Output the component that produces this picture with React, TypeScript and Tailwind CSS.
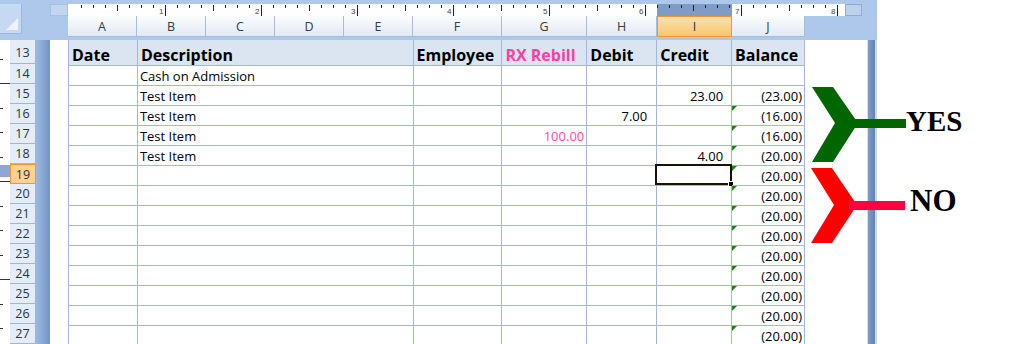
import React from "react";

type Cell = { t: string; pink?: boolean; right?: boolean };

const colW = [69, 276, 89, 85, 70, 75, 73];

const headers: Cell[] = [
  { t: "Date" },
  { t: "Description" },
  { t: "Employee" },
  { t: "RX Rebill", pink: true },
  { t: "Debit" },
  { t: "Credit" },
  { t: "Balance" },
];

// row number -> [A, B, F, G, H, I, J]
const rows: { n: number; cells: string[] }[] = [
  { n: 14, cells: ["", "Cash on Admission", "", "", "", "", ""] },
  { n: 15, cells: ["", "Test Item", "", "", "", "23.00", "(23.00)"] },
  { n: 16, cells: ["", "Test Item", "", "", "7.00", "", "(16.00)"] },
  { n: 17, cells: ["", "Test Item", "", "100.00", "", "", "(16.00)"] },
  { n: 18, cells: ["", "Test Item", "", "", "", "4.00", "(20.00)"] },
  { n: 19, cells: ["", "", "", "", "", "", "(20.00)"] },
  { n: 20, cells: ["", "", "", "", "", "", "(20.00)"] },
  { n: 21, cells: ["", "", "", "", "", "", "(20.00)"] },
  { n: 22, cells: ["", "", "", "", "", "", "(20.00)"] },
  { n: 23, cells: ["", "", "", "", "", "", "(20.00)"] },
  { n: 24, cells: ["", "", "", "", "", "", "(20.00)"] },
  { n: 25, cells: ["", "", "", "", "", "", "(20.00)"] },
  { n: 26, cells: ["", "", "", "", "", "", "(20.00)"] },
  { n: 27, cells: ["", "", "", "", "", "", "(20.00)"] },
];

const colLetters = [
  { l: "A", w: 69 },
  { l: "B", w: 69 },
  { l: "C", w: 69 },
  { l: "D", w: 69 },
  { l: "E", w: 69 },
  { l: "F", w: 89 },
  { l: "G", w: 85 },
  { l: "H", w: 70 },
  { l: "I", w: 75, sel: true },
  { l: "J", w: 73 },
];

// right padding per column (numbers sit close to the edge in G and J)
const padR = ["pr-[7px] ", "pr-[7px] ", "pr-[7px] ", "pr-[2px] ", "pr-[9px] ", "pr-[8px] ", "pr-[2px] "];

const Ruler = () => {
  const ticks = [];
  // ruler svg starts at page x=50
  for (let x = 165 - 96; x < 845; x += 12) {
    if (x < 68) continue;
    const rel = x - 50;
    const fromInch = (((x - 165) % 96) + 96) % 96;
    if (fromInch === 0) continue;
    const h = fromInch === 48 ? 6 : 3;
    ticks.push(<line key={x} x1={rel + 0.5} x2={rel + 0.5} y1={1} y2={1 + h} stroke="#222" strokeWidth={1} />);
  }
  const labels = [1, 2, 3, 4, 5, 6, 7, 8];
  return (
    <svg width={812} height={12} className="block">
      <rect x={0} y={0} width={18} height={12} fill="#c3d6f0" stroke="#8eaad6" />
      <rect x={18} y={0} width={777} height={12} fill="#ffffff" />
      <rect x={607} y={0} width={75} height={12} fill="#7f9cc8" />
      <rect x={795.5} y={0.5} width={16} height={11} fill="#bcd1ee" stroke="#8eaad6" />
      {ticks}
      {labels.map((n) => {
        const x = 165 + 96 * (n - 1) - 50;
        return (
          <g key={n}>
            <line x1={x + 0.5} x2={x + 0.5} y1={1} y2={12} stroke="#222" />
            <text x={x - 6} y={10} fontSize={8} fill="#444" fontFamily="Liberation Sans, sans-serif">
              {n}
            </text>
          </g>
        );
      })}
    </svg>
  );
};

const VRuler = () => {
  const ticks = [];
  for (let i = -2; i < 12; i++) {
    const y = 83 - 40 + i * 24.5;
    if (y < 0 || y > 304) continue;
    const major = ((i % 4) + 4) % 4 === 0;
    ticks.push(
      <line key={i} x1={0} x2={major ? 10 : 3} y1={Math.round(y) + 0.5} y2={Math.round(y) + 0.5} stroke="#333" />
    );
  }
  return (
    <svg width={10} height={304} className="block">
      <rect x={0} y={0} width={10} height={304} fill="#ffffff" />
      <rect x={0} y={125} width={10} height={12} fill="#8da8d2" />
      {ticks}
    </svg>
  );
};

export default function App() {
  return (
    <div
      className="relative w-[1022px] h-[344px] overflow-hidden bg-white flex"
      style={{ fontFamily: "'Open Sans', sans-serif" }}
    >
      {/* excel window */}
      <div className="w-[877px] h-full flex flex-col">
        {/* top: ruler + column headings */}
        <div className="h-[40px] flex bg-[#aec8ec]">
          <div className="w-[50px] pt-[4px]">
            <div className="relative w-[22px] h-[30px] bg-[#c6d9f3] border-r border-b border-[#9cb6dc]">
              <div className="absolute right-[3px] bottom-[3px] w-0 h-0 border-l-[12px] border-l-transparent border-b-[12px] border-b-[#eef3fa]" />
            </div>
          </div>
          <div className="flex flex-col">
            <div className="mt-[4px] h-[12px]">
              <Ruler />
            </div>
            <div className="ml-[18px] h-[21px] flex">
              {colLetters.map((c) => (
                <div
                  key={c.l}
                  className={
                    c.sel
                      ? "h-full flex items-center justify-center pt-[2px] text-[12.5px] text-[#2a3a2a] border border-[#f29536] bg-gradient-to-b from-[#fbe0ad] to-[#f6c66d]"
                      : "h-full flex items-center justify-center pt-[2px] text-[12.5px] text-[#333c4a] border-r border-b border-[#a7bcd9] bg-gradient-to-b from-[#fbfcfe] to-[#e2e9f3]"
                  }
                  style={{ width: c.w }}
                >
                  {c.l}
                </div>
              ))}
            </div>
          </div>
        </div>

        {/* body */}
        <div className="flex-1 flex min-h-0">
          <VRuler />
          {/* row headings */}
          <div className="w-[26px] flex flex-col">
            <div className="h-[26px] flex items-center justify-center pt-[4px] text-[12.5px] text-[#27334a] bg-[#e4ecf7] border-b border-r border-[#9eb6ce]">
              13
            </div>
            {rows.map((r) => (
              <div
                key={r.n}
                className={
                  r.n === 19
                    ? "h-[20px] shrink-0 flex items-center justify-center pt-[2px] text-[12.5px] text-[#27334a] bg-[#fcd28e] border border-[#f29536]"
                    : "h-[20px] shrink-0 flex items-center justify-center pt-[2px] text-[12.5px] text-[#27334a] bg-[#e4ecf7] border-b border-r border-[#9eb6ce]"
                }
              >
                {r.n}
              </div>
            ))}
          </div>
          <div className="w-[14px] bg-gradient-to-r from-[#9db9e2] to-[#7494c6]" />
          <div className="w-[18px] bg-white" />

          {/* grid */}
          <div className="w-[737px] flex flex-col border-l border-[#a3b8d6] text-black">
            <div className="h-[26px] shrink-0 flex bg-[#dbe5f1]">
              {headers.map((h, i) => (
                <div
                  key={i}
                  className={
                    h.pink
                      ? "h-full flex items-end pl-[3px] text-[16px] font-bold leading-[20px] text-[#ff3fa0] border-r border-b border-[#a3b8d6]"
                      : "h-full flex items-end pl-[3px] text-[16px] font-bold leading-[20px] text-black border-r border-b border-[#a3b8d6]"
                  }
                  style={{ width: colW[i] }}
                >
                  {h.t}
                </div>
              ))}
            </div>
            {rows.map((r) => (
              <div key={r.n} className="h-[20px] shrink-0 flex">
                {r.cells.map((c, i) => {
                  const isNum = i >= 3;
                  const pink = i === 3;
                  return (
                    <div
                      key={i}
                      className={
                        "relative h-full flex items-end text-[13px] leading-[17px] border-r border-b border-[#a3b8d6] " +
                        (isNum ? "justify-end " : "pl-[2px] ") +
                        padR[i] +
                        (pink ? "text-[#ff4aa5]" : "text-black")
                      }
                      style={{ width: colW[i] }}
                    >
                      {i === 6 && r.n >= 16 && (
                        <div className="absolute left-0 top-0 w-0 h-0 border-t-[5px] border-t-[#118a11] border-r-[5px] border-r-transparent" />
                      )}
                      {i === 5 && r.n === 19 && (
                        <div className="absolute -left-[2px] -top-[2px] -right-[1px] bottom-0 border-2 border-[#1a1208]">
                          <div className="absolute -right-[4px] -bottom-[4px] w-[6px] h-[6px] bg-black border border-white" />
                        </div>
                      )}
                      {c}
                    </div>
                  );
                })}
              </div>
            ))}
          </div>

          <div className="flex-1 bg-white" />
          {/* vertical splitter */}
          <div className="w-[10px] flex">
            <div className="w-[1px] bg-[#d6dde8]" />
            <div className="w-[7px] bg-gradient-to-r from-[#7f9dc9] to-[#6282b2]" />
            <div className="w-[2px] bg-[#cad7ec]" />
          </div>
        </div>
      </div>

      <div className="flex-1 bg-white" />

      {/* annotation arrows */}
      <svg
        className="absolute left-[800px] top-[80px] pointer-events-none"
        width={120}
        height={170}
        viewBox="800 80 120 170"
      >
        <polygon points="812,87 833,87 858,123 833,162 812,162 835,123" fill="#006600" />
        <rect x={855} y={119} width={51} height={9} fill="#006600" />
        <polygon points="811,168 832,168 857,205 832,243 811,243 834,205" fill="#ff0000" />
        <rect x={849} y={201} width={56} height={9} fill="#ff0040" />
      </svg>
      <div
        className="absolute left-[906px] top-[107px] text-[29px] leading-none font-bold text-black"
        style={{ fontFamily: "'Liberation Serif', serif" }}
      >
        YES
      </div>
      <div
        className="absolute left-[910px] top-[185px] text-[31px] leading-none font-bold text-black"
        style={{ fontFamily: "'Liberation Serif', serif" }}
      >
        NO
      </div>
    </div>
  );
}
